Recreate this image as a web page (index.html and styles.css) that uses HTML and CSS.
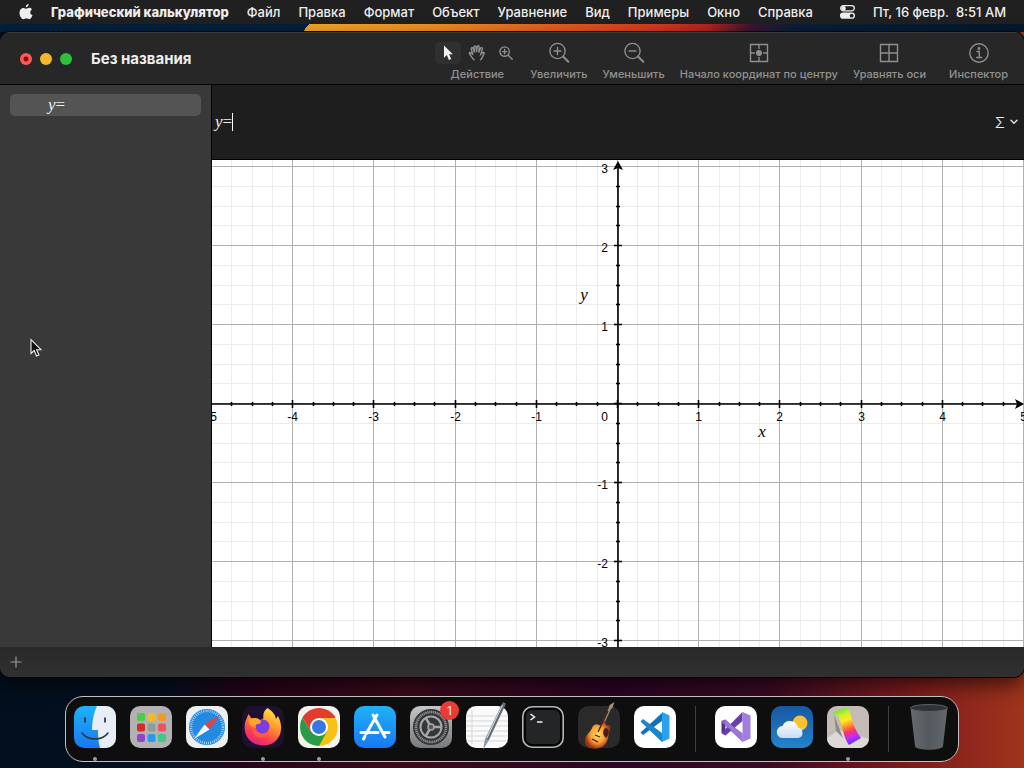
FILE: index.html
```html
<!DOCTYPE html>
<html lang="ru">
<head>
  <meta charset="UTF-8" />
  <meta name="viewport" content="width=device-width, initial-scale=1.0"/>
  <title>Графический калькулятор</title>
  <link rel="stylesheet" href="styles.css">
</head>
<body>
  <header class="menubar">
    <nav class="menus">
      <button class="apple" aria-label="Apple">
        <svg width="14" height="18" viewBox="0 0 14 18"><path d="M9.6 1c.1 1.500-1.200 3.200-2.800 3.200C6.600 2.700 8 1.200 9.600 1zM12.900 6.400c-2.400 1.500-2.100 4.700.6 5.800-.5 1.500-1.700 4-3.200 4-1.100 0-1.600-.7-2.900-.7s-1.900.7-2.900.7C2.500 16.200.5 12.800.5 9.700c0-3 1.900-4.800 3.900-4.800 1.200 0 2.200.8 2.900.8.7 0 1.800-.9 3.200-.9 1 0 1.900.6 2.400 1.600z"/></svg>
      </button>
      <button class="app-name">Графический калькулятор</button>
      <button>Файл</button>
      <button>Правка</button>
      <button>Формат</button>
      <button>Объект</button>
      <button>Уравнение</button>
      <button>Вид</button>
      <button>Примеры</button>
      <button>Окно</button>
      <button>Справка</button>
    </nav>
    <div class="status">
      <button class="control-center" aria-label="Пункт управления">
        <svg width="15" height="14" viewBox="0 0 15 14"><rect x=".7" y=".7" width="13.600" height="5.200" rx="2.600" fill="none" stroke="#eee" stroke-width="1.300"/><circle cx="3.600" cy="3.300" r="2.200"/><rect x="0" y="7.600" width="15" height="6.200" rx="3.100"/><circle cx="11.700" cy="10.700" r="1.900" fill="#222"/></svg>
      </button>
      <time datetime="08:51">Пт, 16 февр.&nbsp; 8:51 AM</time>
    </div>
  </header>
  <div class="wallpaper-strip"></div>

  <main class="window">
    <div class="toolbar">
      <div class="lights">
        <button class="light close" aria-label="Закрыть"></button>
        <button class="light minimize" aria-label="Свернуть"></button>
        <button class="light zoom" aria-label="Развернуть"></button>
      </div>
      <h1>Без названия</h1>
      <div class="tools">
        <div class="tool actions">
          <div class="segments">
            <button class="segment active" aria-label="Выбор">
              <svg width="12" height="18" viewBox="0 0 12 18"><path d="M2 1.500v12.200l2.800-2.600 2.100 4.900 2.300-1-2.100-4.800h3.700z" fill="#f2f2f2"/></svg>
            </button>
            <button class="segment" aria-label="Рука">
              <svg width="18" height="18" viewBox="0 0 18 18" class="line"><path d="M6 15.800C4.300 14.300 2.800 11.600 1.400 9.800.8 8.800 2 8 2.900 8.700l2 2L3.200 5c-.3-1.300 1.400-1.800 1.900-.5l1.400 4L6 3c0-1.400 1.800-1.500 2-.1l.6 5.300.6-5.600c.2-1.400 2-1.200 1.900.2l-.3 5.800 1.700-4.300c.5-1.200 2.200-.7 1.900.6l-1.500 5.300 1.500-1.500c1-.8 2.500 0 1.700 1.100-1.200 1.500-1.600 4.300-3.500 6"/></svg>
            </button>
            <button class="segment" aria-label="Лупа">
              <svg width="14" height="14" viewBox="0 0 14 14" class="line"><circle cx="5.600" cy="5.600" r="4.700"/><path d="M9.200 9.200l4 4M3.500 5.600h4.200M5.600 3.500v4.200"/></svg>
            </button>
          </div>
          <span>Действие</span>
        </div>
        <button class="tool">
          <svg width="22" height="22" viewBox="0 0 22 22" class="line"><circle cx="9.500" cy="9" r="7.600"/><path d="M15 14.500l5.300 5.300" stroke-width="2"/><path d="M6 9h7M9.500 5.500v7"/></svg>
          <span>Увеличить</span>
        </button>
        <button class="tool">
          <svg width="22" height="22" viewBox="0 0 22 22" class="line"><circle cx="9.500" cy="9" r="7.600"/><path d="M15 14.500l5.300 5.300" stroke-width="2"/><path d="M6 9h7"/></svg>
          <span>Уменьшить</span>
        </button>
        <button class="tool">
          <svg width="22" height="22" viewBox="0 0 22 22" class="line"><path d="M2.500 2.500h17v17h-17zM11 2.500v4M11 15.500v4M2.500 11h4M15.500 11h4"/><circle cx="11" cy="11" r="2.300" fill="#8f8f8f"/></svg>
          <span>Начало координат по центру</span>
        </button>
        <button class="tool">
          <svg width="22" height="22" viewBox="0 0 22 22" class="line"><path d="M2.500 2.500h17v17h-17zM11 2.500v17M2.500 11h17"/></svg>
          <span>Уравнять оси</span>
        </button>
        <button class="tool inspector">
          <svg width="22" height="22" viewBox="0 0 22 22" class="line"><circle cx="11" cy="11" r="9.200"/><path d="M9 9.500h2.300V15.500M8.700 15.500h5"/><circle cx="11" cy="6.500" r=".7" fill="#8f8f8f"/></svg>
          <span>Инспектор</span>
        </button>
      </div>
    </div>

    <div class="content">
      <aside class="sidebar">
        <button class="equation"><i>y</i>=</button>
      </aside>
      <section class="document">
        <div class="editor">
          <label for="equation"><i>y</i>=</label>
          <input type="text" id="equation" autocomplete="off" />
          <button class="symbols" aria-label="Символы" aria-haspopup="true">
            <span>Σ</span>
            <svg width="8" height="6" viewBox="0 0 8 6"><path d="M1 1.200l3 3 3-3" fill="none" stroke="#ddd" stroke-width="1.500" stroke-linecap="round"/></svg>
          </button>
        </div>
        <div class="plot">
          <svg id="graph"></svg>
        </div>
      </section>
    </div>

    <footer class="bottombar">
      <button class="add" aria-label="Добавить">
        <svg width="12" height="12" viewBox="0 0 12 12"><path d="M6 .5v11M.5 6h11" stroke="#9a9a9a" stroke-width="1.200"/></svg>
      </button>
    </footer>
  </main>

  <nav class="dock">
    <button class="dock-item running" aria-label="Finder">
      <svg viewBox="0 0 42 42">
        <defs><linearGradient id="finder" x2="0" y2="1"><stop stop-color="#1fb2f8"/><stop offset="1" stop-color="#1878f2"/></linearGradient><clipPath id="tile"><rect width="42" height="42" rx="10"/></clipPath></defs>
        <g clip-path="url(#tile)"><rect width="42" height="42" fill="url(#finder)"/><path d="M23 0c-3.500 8-4.800 15-5 24h6c-.2 7 .5 12 2 18h16V0z" fill="#e9edf5"/></g>
        <path d="M11 12v4M31 12v4" stroke="#17233a" stroke-width="1.600" stroke-linecap="round"/><path d="M8 27c6 8 20 8 26 0" fill="none" stroke="#2b3340" stroke-width="1.500" stroke-linecap="round"/>
      </svg>
    </button>
    <button class="dock-item" aria-label="Launchpad">
      <svg viewBox="0 0 42 42">
        <rect width="42" height="42" rx="10" fill="#b2b2b4"/>
        <rect x="7" y="7" width="8" height="8" rx="2" fill="#47cf45"/><rect x="17.500" y="7" width="8" height="8" rx="2" fill="#f3b92d"/><rect x="28" y="7" width="8" height="8" rx="2" fill="#f39a25"/>
        <rect x="7" y="17.500" width="8" height="8" rx="2" fill="#d22b2a"/><rect x="17.500" y="17.500" width="8" height="8" rx="2" fill="#8d9d99"/><rect x="28" y="17.500" width="8" height="8" rx="2" fill="#ef5266"/>
        <rect x="7" y="28" width="8" height="8" rx="2" fill="#9444c8"/><rect x="17.500" y="28" width="8" height="8" rx="2" fill="#279bea"/><rect x="28" y="28" width="8" height="8" rx="2" fill="#3cc98c"/>
      </svg>
    </button>
    <button class="dock-item" aria-label="Safari">
      <svg viewBox="0 0 42 42">
        <rect width="42" height="42" rx="10" fill="#edf0f3"/><circle cx="21" cy="21" r="18" fill="#2489e0"/>
        <circle cx="21" cy="21" r="16" fill="none" stroke="#d8edff" stroke-width="2.500" stroke-dasharray=".7 1.400"/>
        <path d="M34 9L18.500 18.500l5 5z" fill="#e8403c"/><path d="M8 33l10.500-14.500 5 5z" fill="#f7f7f7"/>
      </svg>
    </button>
    <button class="dock-item running" aria-label="Firefox">
      <svg viewBox="0 0 42 42">
        <defs><linearGradient id="fox" x1=".8" y1="0" x2=".3" y2="1"><stop stop-color="#ffe84a"/><stop offset=".4" stop-color="#ff9a2c"/><stop offset=".75" stop-color="#fb3d50"/><stop offset="1" stop-color="#e0208a"/></linearGradient></defs>
        <rect width="42" height="42" rx="10" fill="#1d1031"/>
        <path d="M25.500 2c5 3 8 7 8.500 11l2-3c7 13 2 29-14.500 29.500C7 39.500 0 27 3.500 15L5 11.500 6.500 8l3 4.500c3-1 5.500-.5 8 1.500 2 0 3-1 4-2-1-4 1-8 4-10z" fill="url(#fox)"/>
        <circle cx="20.500" cy="20.500" r="7" fill="#7b3ddd"/><path d="M7 13c4 0 7-2 11 1 2 1 1 4-2 4-3 .5-3 2-2 4-6-1-8-5-7-9z" fill="#ffa52d"/><path d="M13 19c-1 8 7 12 14 6-2 8-13 9-16 1z" fill="#fb5d3c"/>
      </svg>
    </button>
    <button class="dock-item running" aria-label="Chrome">
      <svg viewBox="0 0 42 42">
        <rect width="42" height="42" rx="10" fill="#f3f2ed"/>
        <path d="M21 21L4.550 11.500a19 19 0 0 1 32.900 0z" fill="#e33b2e"/><path d="M21 21V12h16.450A19 19 0 0 1 21 40z" fill="#fac115"/><path d="M13 25.500L4.550 11.500A19 19 0 0 0 21 40l8-14.500z" fill="#2a9c48"/><path d="M4.550 11.500L13 25.500l8-13.500h16.400z" fill="#e33b2e"/>
        <circle cx="21" cy="21" r="9" fill="#fff"/><circle cx="21" cy="21" r="7" fill="#3777e0"/>
      </svg>
    </button>
    <button class="dock-item" aria-label="App Store">
      <svg viewBox="0 0 42 42">
        <rect width="42" height="42" rx="10" fill="url(#finder)"/>
        <path d="M23 9L12 28M19 9l12 22M7 26.500h17M30 26.500h5M10.800 30.500L9.500 33" fill="none" stroke="#fff" stroke-width="3" stroke-linecap="round"/>
      </svg>
    </button>
    <button class="dock-item" aria-label="Системные настройки">
      <svg viewBox="0 0 42 42">
        <defs><linearGradient id="steel" x2="0" y2="1"><stop stop-color="#c4c7c9"/><stop offset="1" stop-color="#77797b"/></linearGradient></defs>
        <rect width="42" height="42" rx="10" fill="url(#steel)"/><circle cx="21" cy="21" r="18" fill="#343638"/>
        <circle cx="21" cy="21" r="15" fill="none" stroke="#929597" stroke-width="2.500" stroke-dasharray="1.200 .7"/><circle cx="21" cy="21" r="10.500" fill="none" stroke="#a4a7a9" stroke-width="2"/>
        <path d="M21 21h11M21 21l-5.500-9.500M21 21l-5.500 9.500" stroke="#a4a7a9" stroke-width="2.500"/><circle cx="21" cy="21" r="3" fill="#55585a" stroke="#a4a7a9" stroke-width="1.500"/>
      </svg>
      <span class="badge">1</span>
    </button>
    <button class="dock-item" aria-label="TextEdit">
      <svg viewBox="0 0 42 42">
        <rect width="42" height="42" rx="10" fill="#fafafa"/><path d="M0 10h42M0 15h42M0 20h42M0 25h42M0 30h42M2 35h38M6 4v34" stroke="#d3d5d8" stroke-width="1"/>
        <path d="M36-2l3 1.500L23 34l-6 10 2-11z" fill="#8e9aa3"/><path d="M37-4l3 1.500L22.500 34l-2-1z" fill="#5e6b75"/><path d="M36.500-1L21 32" stroke="#dbe3e9" stroke-width="1"/>
      </svg>
    </button>
    <button class="dock-item" aria-label="Терминал">
      <svg viewBox="0 0 42 42">
        <rect x=".8" y=".8" width="40.400" height="40.400" rx="9.500" fill="#050505" stroke="#b5b7b8" stroke-width="1.600"/><rect x="4" y="4" width="34" height="34" rx="6" fill="#242526"/>
        <path d="M8.500 8l4 3-4 3M15 16h5.500" fill="none" stroke="#f4f4f4" stroke-width="1.500"/>
      </svg>
    </button>
    <button class="dock-item" aria-label="GarageBand">
      <svg viewBox="0 0 42 42">
        <defs><radialGradient id="burst"><stop stop-color="#ffe05a"/><stop offset=".6" stop-color="#f79a34"/><stop offset="1" stop-color="#9a3018"/></radialGradient></defs>
        <rect width="42" height="42" rx="10" fill="#2a2a2b"/>
        <path d="M22 24L33 0" stroke="#a08b76" stroke-width="2.500"/><path d="M31.500-1l5-3-2 6-3 1z" fill="#a3917c"/>
        <path d="M14 22c1-3 4-5 7-3 2 1 4-2 6-5 1 3 0 6 4 5 3 1 1 5 0 8-1 4-1 11-7 14-8 4-18 1-17-7 0-5 5-7 7-12z" fill="url(#burst)"/>
        <path d="M27 22c5 0 5 6 1 10-3-2-4-7-1-10z" fill="#4a1f10"/><path d="M14 33l6 3M17 29l5 2M20 26L30 5" stroke="#3c1c10" stroke-width="1.300"/>
      </svg>
    </button>
    <button class="dock-item" aria-label="Visual Studio Code">
      <svg viewBox="0 0 42 42">
        <rect width="42" height="42" rx="10" fill="#fff"/>
        <path d="M28 7L6.500 26.500 9 29l19-14z" fill="#1470b8"/><path d="M9 13l-2.500 2.500L28 36V27z" fill="#1b84cf"/><path d="M28 6l7.500 3.500v23L28 36z" fill="#2ba0ec"/>
      </svg>
    </button>
    <span class="separator"></span>
    <button class="dock-item" aria-label="Visual Studio">
      <svg viewBox="0 0 42 42">
        <rect width="42" height="42" rx="10" fill="#fff"/>
        <path d="M6.500 15l4-1.500v16l-4-2.500z" fill="#50308a"/><path d="M10 13.500L6.500 16 27.500 36v-8.500z" fill="#8d65c9"/><path d="M27.500 6L6.500 27l4 2.500L27.500 15z" fill="#6741a5"/><path d="M10.500 13.500L27.500 29v6.500L19 27l-8.500-8z" fill="#9c78d6"/><path d="M27.500 6l8 3.500v23l-8 3.500z" fill="#a27de0"/>
      </svg>
    </button>
    <button class="dock-item" aria-label="Погода">
      <svg viewBox="0 0 42 42">
        <defs><linearGradient id="sky" x2="0" y2="1"><stop stop-color="#1857a2"/><stop offset="1" stop-color="#2284cd"/></linearGradient><linearGradient id="cloud" x2="0" y2="1"><stop stop-color="#fff"/><stop offset="1" stop-color="#c7dcf7"/></linearGradient></defs>
        <rect width="42" height="42" rx="10" fill="url(#sky)"/><circle cx="29" cy="17" r="7.500" fill="#fbc22f"/>
        <path d="M12 32a6 6 0 0 1-.5-12 8 8 0 0 1 15.300 1.500A5.300 5.300 0 0 1 27 32z" fill="url(#cloud)"/>
      </svg>
    </button>
    <button class="dock-item running" aria-label="Графический калькулятор">
      <svg viewBox="0 0 42 42">
        <defs><linearGradient id="ribbon" x1=".2" y1="0" x2=".5" y2="1"><stop stop-color="#57dc3c"/><stop offset=".2" stop-color="#c5ef2d"/><stop offset=".38" stop-color="#ffec22"/><stop offset=".55" stop-color="#ff8a2c"/><stop offset=".7" stop-color="#f8306f"/><stop offset=".85" stop-color="#c42cf6"/><stop offset="1" stop-color="#6a35fa"/></linearGradient></defs>
        <rect width="42" height="42" rx="10" fill="#c5bcb7"/><path d="M0 32l12-8 30 9a10 10 0 0 1-10 9H10A10 10 0 0 1 0 32z" fill="#ddd9d5"/><path d="M7 9l2 16 7 7z" fill="#8b8c84"/>
        <path d="M5 7c6-3 10-5 16-5 4 7 3 17 13 30l-12 7C14 29 16 8 5 7z" fill="url(#ribbon)"/>
      </svg>
    </button>
    <span class="separator"></span>
    <button class="dock-item" aria-label="Корзина">
      <svg viewBox="0 0 42 42">
        <defs><linearGradient id="bin"><stop stop-color="#6a6f73"/><stop offset=".5" stop-color="#575d62"/><stop offset="1" stop-color="#686d71"/></linearGradient></defs>
        <path d="M2.500 1.500h37L35 40c-.3 5-27.700 5-28 0z" fill="url(#bin)" opacity=".95"/><ellipse cx="21" cy="2" rx="18.500" ry="3.500" fill="#303437" stroke="#5c6165"/>
      </svg>
    </button>
  </nav>

  <svg class="cursor" width="13" height="20" viewBox="0 0 13 20"><path d="M1 1.500v14l3.200-3 2.300 5.500 2.400-1-2.300-5.300H11z" fill="#111" stroke="#eee" stroke-width="1.100"/></svg>

  <script src="graph.js"></script>
</body>
</html>
```
FILE: styles.css
```css
* {
  margin: 0;
  padding: 0;
  box-sizing: border-box;
}

body {
  height: 100vh;
  display: flex;
  flex-direction: column;
  overflow: hidden;
  font-family: Inter, "Liberation Sans", sans-serif;
  font-size: 13px;
  color: #eee;
  background: linear-gradient(90deg, #020f1e 0%, #04101f 16%, #27041a 24%, #3b0a1b 40%, #2c0524 60%, #3a0a24 75%, #7a1a1c 88%, #a0341c 100%);
}

button {
  background: none;
  border: none;
  color: inherit;
  font: inherit;
  white-space: nowrap;
}

/* Menu bar */
.menubar {
  height: 24px;
  display: flex;
  justify-content: space-between;
  align-items: center;
  padding: 0 18px 0 19px;
  background-color: #202020;
  font-weight: 500;
}

.menus {
  display: flex;
  align-items: center;
  gap: 18px;
}

.menubar svg {
  display: block;
  fill: #eee;
}

.app-name {
  font-weight: 800;
}

.status {
  display: flex;
  align-items: center;
  gap: 18px;
}

.wallpaper-strip {
  height: 8px;
  background: linear-gradient(130deg, #03203c 30%, #f5a524 30%, #f09020 42%, #e2561c 56%, #d33a1c 64%, #b3221f 69%, #3c1630 73%, #0a1e38 77%, #03182c 100%);
}

/* Window */
.window {
  flex: 1;
  min-height: 0;
  display: flex;
  flex-direction: column;
  border-radius: 10px;
  overflow: hidden;
  background-color: #272727;
  box-shadow: 0 0 0 1px #080808, 0 8px 20px rgba(0, 0, 0, 0.6);
}

.toolbar {
  height: 53px;
  display: flex;
  align-items: center;
  padding: 0 16px 0 20px;
  background-color: #272727;
  border-top: 1px solid #3a3a3a;
  border-bottom: 1px solid #000;
}

.lights {
  display: flex;
  gap: 8px;
}

.light {
  width: 12px;
  height: 12px;
  border-radius: 50%;
}

.close {
  background: radial-gradient(circle, #8d0b0b 2px, #fa5a58 3px);
}

.minimize {
  background-color: #f8b62d;
}

.zoom {
  background-color: #2cc13f;
}

h1 {
  margin-left: 19px;
  font-size: 15px;
  font-weight: 700;
}

.tools {
  display: flex;
  gap: 15px;
  margin-left: auto;
  padding-top: 6px;
  color: #929292;
  font-size: 11px;
  line-height: 16px;
}

.tool {
  display: flex;
  flex-direction: column;
  align-items: center;
  gap: 2px;
  font-weight: 500;
}

.actions {
  margin-right: -4px;
}

.inspector {
  margin-left: 8px;
}

.segments {
  height: 22px;
  display: flex;
  gap: 3px;
}

.segment {
  width: 26px;
  display: flex;
  align-items: center;
  justify-content: center;
  border-radius: 5px;
}

.active {
  background-color: #303030;
}

.line {
  fill: none;
  stroke: #8f8f8f;
  stroke-width: 1.4px;
  stroke-linecap: round;
}

.content {
  flex: 1;
  min-height: 0;
  display: flex;
}

.sidebar {
  width: 212px;
  padding: 9px 10px;
  background-color: #393939;
  border-right: 1px solid #000;
}

.equation {
  display: block;
  width: 100%;
  height: 22px;
  padding-left: 38px;
  border-radius: 5px;
  background-color: #545454;
  font-family: "Liberation Serif", serif;
  font-size: 17px;
  line-height: 20px;
  text-align: left;
}

.document {
  flex: 1;
  min-width: 0;
  display: flex;
  flex-direction: column;
}

.editor {
  height: 75px;
  display: flex;
  align-items: center;
  padding: 0 6px 0 3px;
  background-color: #1e1e1e;
  border-bottom: 1px solid #000;
  font-family: "Liberation Serif", serif;
  font-size: 17px;
}

.editor input {
  flex: 1;
  height: 18px;
  background: none;
  border: none;
  border-left: 1px solid #fff;
  outline: none;
  color: #eee;
  font: inherit;
}

.symbols {
  display: flex;
  align-items: center;
  gap: 5px;
  font-family: Inter, sans-serif;
  font-size: 15px;
  font-weight: 300;
}

.plot {
  flex: 1;
  min-height: 0;
  background-color: #fff;
}

.plot svg {
  display: block;
  width: 100%;
  height: 100%;
}

.grid-minor {
  stroke: #ececec;
}

.grid-major {
  stroke: #b0b0b0;
}

.axis {
  stroke: #000;
  stroke-width: 1.6px;
}

.number {
  font-family: "Liberation Sans", sans-serif;
  font-size: 12px;
}

.variable {
  font-family: "Liberation Serif", serif;
  font-size: 17px;
  font-style: italic;
}

.bottombar {
  height: 30px;
  display: flex;
  align-items: center;
  padding: 0 10px;
  background: linear-gradient(#292929, #303030);
}

.add svg {
  display: block;
}

/* Dock */
.dock {
  align-self: center;
  height: 66px;
  display: flex;
  gap: 14px;
  margin: 19px 0 6px;
  padding: 9px 8px;
  background-color: #0e0e0f;
  border: 1px solid #c4c0c0;
  border-radius: 18px;
}

.dock-item {
  position: relative;
  width: 42px;
  height: 42px;
}

.dock-item svg {
  display: block;
  width: 42px;
  height: 42px;
  overflow: visible;
}

.running::after {
  content: "";
  position: absolute;
  left: 19px;
  bottom: -13px;
  width: 4px;
  height: 4px;
  border-radius: 50%;
  background-color: #9b9b9b;
}

.badge {
  position: absolute;
  top: -5px;
  right: -7px;
  width: 19px;
  height: 19px;
  border-radius: 50%;
  background-color: #ee3a35;
  font-size: 12px;
  line-height: 19px;
}

.separator {
  width: 1px;
  margin: 0 5px;
  background-color: #3f3f40;
}

.cursor {
  position: absolute;
  left: 30px;
  top: 338px;
}
```
FILE: graph.js
```js
const graph = document.getElementById('graph');
const NS = 'http://www.w3.org/2000/svg';

function line(x1, y1, x2, y2, className) {
  const el = document.createElementNS(NS, 'line');
  el.setAttribute('x1', x1);
  el.setAttribute('y1', y1);
  el.setAttribute('x2', x2);
  el.setAttribute('y2', y2);
  el.setAttribute('class', className);
  graph.appendChild(el);
}

function text(x, y, value, className, anchor) {
  const el = document.createElementNS(NS, 'text');
  el.setAttribute('x', x);
  el.setAttribute('y', y);
  el.setAttribute('class', className);
  el.setAttribute('text-anchor', anchor);
  el.textContent = value;
  graph.appendChild(el);
}

function arrow(points) {
  const el = document.createElementNS(NS, 'polygon');
  el.setAttribute('points', points);
  graph.appendChild(el);
}

function draw() {
  graph.innerHTML = '';
  const w = graph.clientWidth;
  const h = graph.clientHeight;
  const cx = Math.round(w / 2);
  const cy = Math.round(h / 2);
  const unitX = w / 10; // x runs from -5 to 5
  const unitY = 79;
  const stepsY = Math.floor(cy / unitY * 4);
  const px = i => Math.round(cx + i * unitX / 4) - 0.5;
  const py = i => Math.round(cy - i * unitY / 4) - 0.5;

  // minor lines first so the major ones stay on top
  ['grid-minor', 'grid-major'].forEach(name => {
    const major = name === 'grid-major';
    for (let i = -20; i <= 20; i++) {
      if ((i % 4 === 0) === major) line(px(i), 0, px(i), h, name);
    }
    for (let i = -stepsY; i <= stepsY; i++) {
      if ((i % 4 === 0) === major) line(0, py(i), w, py(i), name);
    }
  });

  // axes and ticks
  line(0, cy, w - 6, cy, 'axis');
  line(cx, 6, cx, h, 'axis');
  for (let i = -19; i < 20; i++) {
    const size = i % 4 ? 2 : 4;
    line(px(i), cy - size, px(i), cy + size, 'axis');
  }
  for (let i = -stepsY; i < stepsY; i++) {
    const size = i % 4 ? 2 : 4;
    line(cx - size, py(i), cx + size, py(i), 'axis');
  }
  arrow(`${w},${cy} ${w - 9},${cy - 5} ${w - 7},${cy} ${w - 9},${cy + 5}`);
  arrow(`${cx},1 ${cx - 5},10 ${cx},8 ${cx + 5},10`);

  // numbers
  for (let n = -5; n <= 5; n++) {
    if (n) text(px(n * 4), cy + 17, n, 'number', 'middle');
  }
  for (let n = -3; n <= 3; n++) {
    if (n) text(cx - 10, py(n * 4) + 6, n, 'number', 'end');
  }
  text(cx - 10, cy + 17, 0, 'number', 'end');
  text(cx + 144, cy + 33, 'x', 'variable', 'middle');
  text(cx - 34, cy - 104, 'y', 'variable', 'middle');
}

draw();
window.addEventListener('resize', draw);
```
